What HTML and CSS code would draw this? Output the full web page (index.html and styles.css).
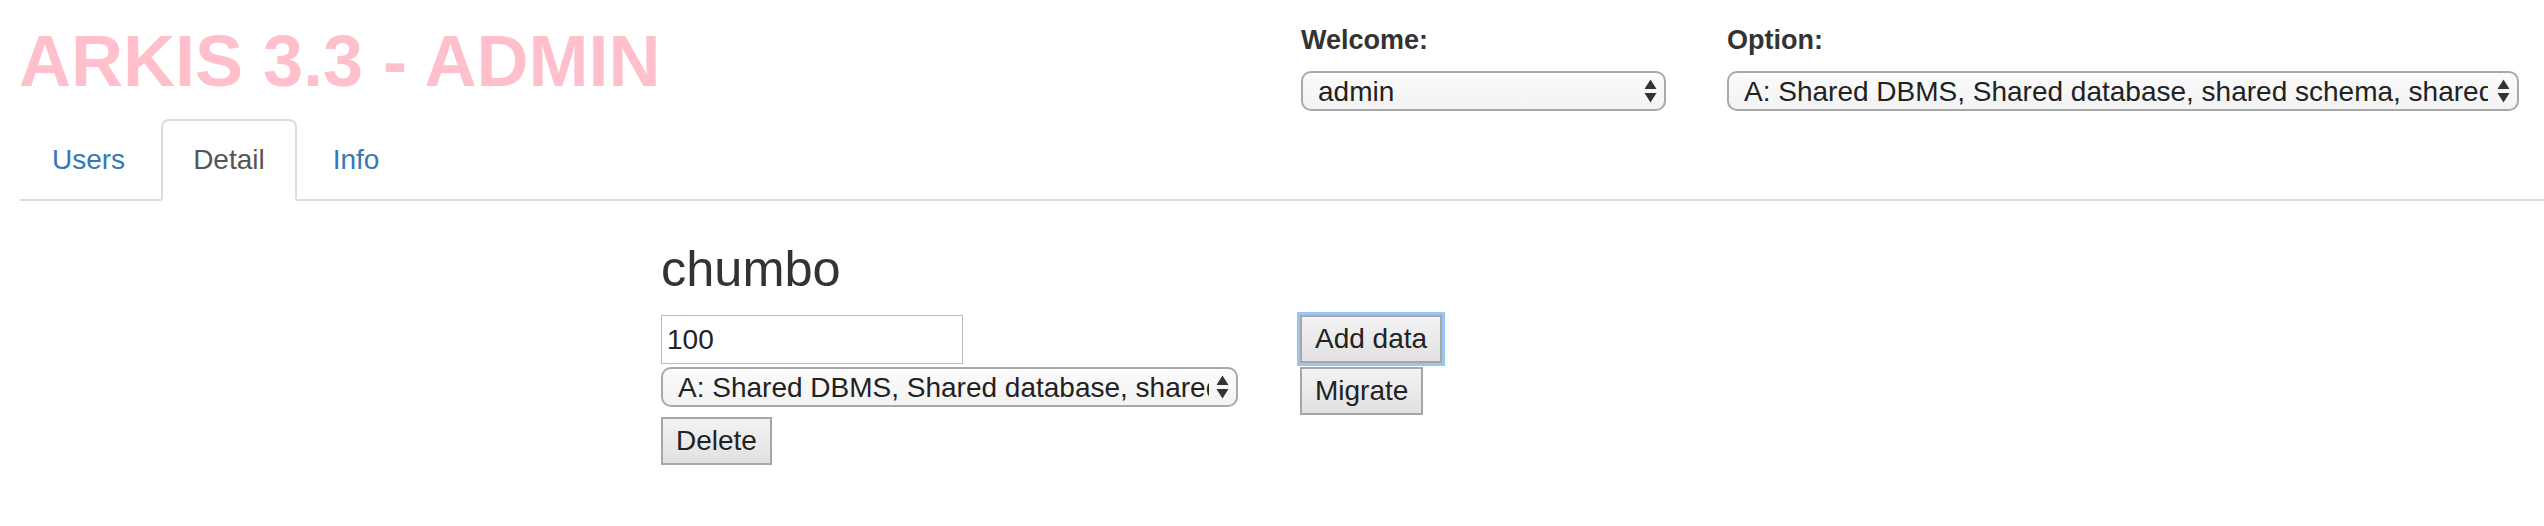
FILE: index.html
```html
<!DOCTYPE html>
<html lang="en">
<head>
<meta charset="utf-8">
<title>ARKIS 3.3 - ADMIN</title>
<link rel="stylesheet" href="styles.css">
</head>
<body>
<header class="top">
  <h1 class="brand">ARKIS 3.3 - ADMIN</h1>
  <div class="pickers">
    <div class="field field-welcome">
      <label class="field-label" for="welcome">Welcome:</label>
      <div class="select-wrap">
        <select class="select" id="welcome">
          <option>admin</option>
        </select>
        <svg class="arrows" viewBox="0 0 13 24" aria-hidden="true"><polygon points="0.5,10 6.5,0.5 12.5,10"/><polygon points="0.5,14 12.5,14 6.5,23.5"/></svg>
      </div>
    </div>
    <div class="field field-option">
      <label class="field-label" for="option">Option:</label>
      <div class="select-wrap">
        <select class="select" id="option">
          <option>A: Shared DBMS, Shared database, shared schema, shared tables</option>
        </select>
        <svg class="arrows" viewBox="0 0 13 24" aria-hidden="true"><polygon points="0.5,10 6.5,0.5 12.5,10"/><polygon points="0.5,14 12.5,14 6.5,23.5"/></svg>
      </div>
    </div>
  </div>
</header>

<ul class="tabs">
  <li class="tab"><a class="tab-link" href="#">Users</a></li>
  <li class="tab tab-active"><a class="tab-link" href="#">Detail</a></li>
  <li class="tab"><a class="tab-link" href="#">Info</a></li>
</ul>

<main class="detail">
  <h3 class="detail-title">chumbo</h3>
  <div class="detail-row">
    <div class="col-left">
      <input class="text-input" type="text" value="100">
      <div class="select-wrap select-wrap-main">
        <select class="select select-main">
          <option>A: Shared DBMS, Shared database, shared schema, shared tables</option>
        </select>
        <svg class="arrows" viewBox="0 0 13 24" aria-hidden="true"><polygon points="0.5,10 6.5,0.5 12.5,10"/><polygon points="0.5,14 12.5,14 6.5,23.5"/></svg>
      </div>
      <button class="btn btn-delete" type="button">Delete</button>
    </div>
    <div class="col-right">
      <button class="btn btn-focus" type="button">Add data</button>
      <button class="btn" type="button">Migrate</button>
    </div>
  </div>
</main>
</body>
</html>
```
FILE: styles.css
```css
body {
  margin: 0;
  font-family: "Liberation Sans", Arial, Helvetica, sans-serif;
  color: #333;
  background: #fff;
}

.top {
  display: flex;
  justify-content: space-between;
  align-items: flex-start;
  padding: 21px 25px 0 19px;
}

.brand {
  margin: 1px 0 0;
  font-size: 72px;
  line-height: 78px;
  font-weight: bold;
  color: #ffc0cb;
}

.pickers {
  display: flex;
  gap: 61px;
}

.field-welcome { width: 365px; }
.field-option { width: 792px; }

.field-label {
  display: block;
  font-weight: bold;
  font-size: 27px;
  line-height: 38px;
  margin-bottom: 12px;
  color: #333;
}

.select-wrap {
  position: relative;
}

.select {
  -webkit-appearance: none;
  appearance: none;
  display: block;
  width: 100%;
  height: 40px;
  box-sizing: border-box;
  margin: 0;
  padding: 0 29px 0 15px;
  border: 2px solid #a9a9a9;
  border-radius: 10px;
  background: linear-gradient(#fbfbfb, #f3f3f3);
  font-family: "Liberation Sans", Arial, Helvetica, sans-serif;
  font-size: 28px;
  color: #222;
}

.select-main {
  padding-right: 27px;
}

.arrows {
  position: absolute;
  right: 9px;
  top: 50%;
  width: 13px;
  height: 24px;
  transform: translateY(-50%);
  fill: #333;
  pointer-events: none;
}

.tabs {
  list-style: none;
  display: flex;
  margin: 8px 0 0 20px;
  padding: 0;
  border-bottom: 2px solid #ddd;
}

.tab {
  margin: 0 4px -2px 0;
}

.tab-link {
  display: block;
  padding: 20px 30px;
  font-size: 28px;
  line-height: 38px;
  border: 2px solid transparent;
  border-radius: 8px 8px 0 0;
  color: #337ab7;
  text-decoration: none;
}

.tab-active .tab-link {
  color: #555;
  background: #fff;
  border-color: #ddd;
  border-bottom-color: transparent;
}

.detail {
  padding-left: 661px;
}

.detail-title {
  margin: 41px 0 19px;
  font-size: 50.5px;
  line-height: 54px;
  font-weight: normal;
  color: #333;
}

.detail-row {
  display: grid;
  grid-template-columns: 639px auto;
  align-items: start;
}

.col-left {
  display: flex;
  flex-direction: column;
  align-items: flex-start;
}

.text-input {
  width: 302px;
  height: 49px;
  box-sizing: border-box;
  margin: 0 0 3px;
  padding: 0 5px;
  border: 1px solid #bdbdbd;
  font-family: "Liberation Sans", Arial, Helvetica, sans-serif;
  font-size: 28px;
  color: #222;
  outline: none;
}

.select-wrap-main {
  width: 577px;
}

.btn {
  height: 48px;
  box-sizing: border-box;
  margin: 0;
  padding: 0 13px;
  border: 2px solid #a6a6a6;
  border-radius: 0;
  background: linear-gradient(#f3f3f3, #e1e1e1);
  font-family: "Liberation Sans", Arial, Helvetica, sans-serif;
  font-size: 28px;
  color: #222;
}

.btn-delete {
  margin-top: 10px;
}

.col-right {
  display: flex;
  flex-direction: column;
  align-items: flex-start;
  gap: 4px;
}

.btn-focus {
  box-shadow: 0 0 0 3px #9cc4f2;
}
```
